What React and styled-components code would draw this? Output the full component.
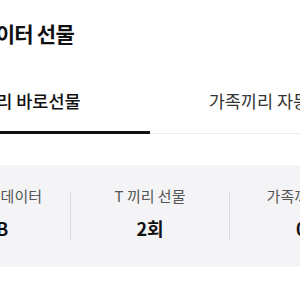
import styled, { createGlobalStyle } from "styled-components";

const GlobalStyle = createGlobalStyle`
  body {
    margin: 0;
    background: #fff;
    overflow: hidden;
    font-family: "Noto Sans CJK KR", "Noto Sans", sans-serif;
    color: #111;
  }
`;

const Page = styled.div`
  width: 500px;
  margin-left: -100px;
`;

const Header = styled.header`
  padding: 18px 24px 0;
`;

const Title = styled.h1`
  margin: 0;
  font-size: 21px;
  line-height: 30px;
  font-weight: 700;
  letter-spacing: -0.8px;
`;

const TabList = styled.div`
  display: flex;
  margin-top: 22px;
  border-bottom: 1px solid #ededed;
`;

const Tab = styled.div`
  flex: 1;
  text-align: center;
  font-size: 17.5px;
  line-height: 24px;
  padding: 19px 0 18px;
  margin-bottom: -1px;
  font-weight: ${(p) => (p.$active ? 500 : 400)};
  color: ${(p) => (p.$active ? "#111" : "#333")};
  border-bottom: 3px solid ${(p) => (p.$active ? "#111" : "transparent")};
`;

const Panel = styled.section`
  margin-top: 31px;
  background: #f4f4f6;
  padding: 21px 11px 26px;
  display: flex;
`;

const Stat = styled.div`
  flex: 1;
  display: flex;
  flex-direction: column;
  align-items: center;
`;

const Divider = styled.div`
  width: 1px;
  background: #dcdcdf;
  margin-top: 5px;
`;

const Label = styled.div`
  font-size: 15px;
  line-height: 20px;
  color: #555;
`;

const Value = styled.div`
  margin-top: 9px;
  font-size: 18px;
  line-height: 26px;
  font-weight: 700;
  color: #111;
`;

const stats = [
  { label: "선물 가능 데이터", value: "2GB" },
  { label: "T 끼리 선물", value: "2회" },
  { label: "가족끼리 선물", value: "0회" },
];

export default function App() {
  return (
    <Page>
      <GlobalStyle />
      <Header>
        <Title>T끼리 데이터 선물</Title>
      </Header>
      <TabList>
        <Tab $active>T끼리 바로선물</Tab>
        <Tab>가족끼리 자동선물</Tab>
      </TabList>
      <Panel>
        {stats.map((s, i) => (
          <>
            {i > 0 && <Divider key={"d" + i} />}
            <Stat key={s.label}>
              <Label>{s.label}</Label>
              <Value>{s.value}</Value>
            </Stat>
          </>
        ))}
      </Panel>
    </Page>
  );
}
